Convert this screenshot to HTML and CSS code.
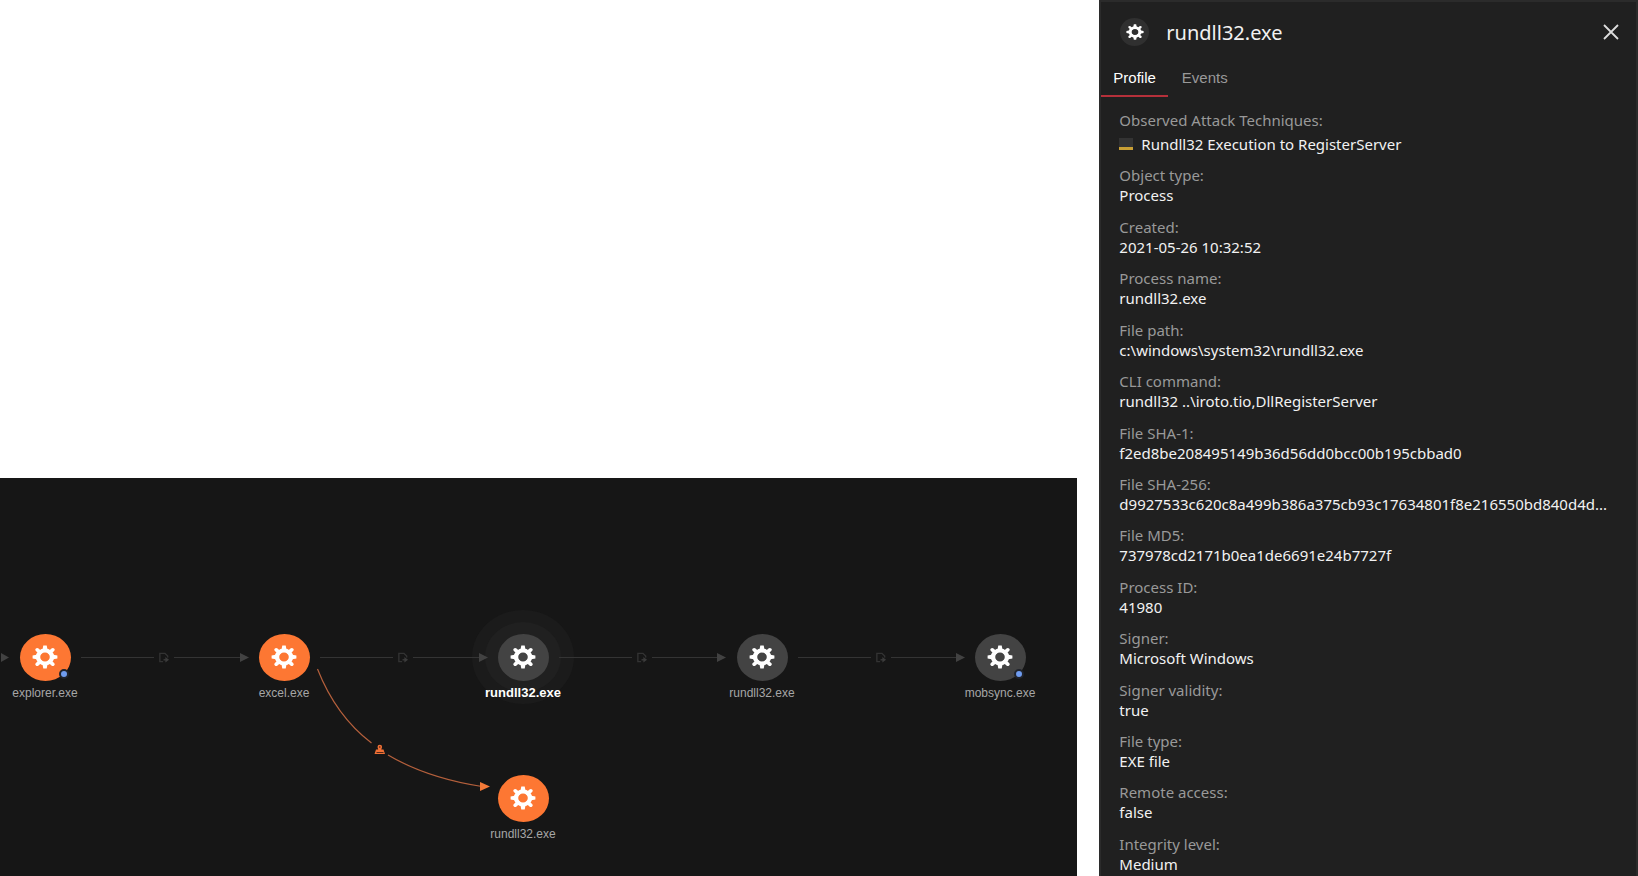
FILE: index.html
```html
<!DOCTYPE html>
<html lang="en">
<head>
  <meta charset="UTF-8">
  <meta name="viewport" content="width=device-width, initial-scale=1.0">
  <title>rundll32.exe</title>
  <link rel="stylesheet" href="styles.css">
</head>
<body>
  <svg class="defs" aria-hidden="true">
    <symbol id="gear" viewBox="0 0 26 26" preserveAspectRatio="none">
      <circle cx="13" cy="13" r="7" fill="none" stroke="#fff" stroke-width="4.4"/>
      <path d="M11.300 0.600h3.400l1 5.400h-5.400zM11.300 25.400h3.400l1-5.400h-5.400zM0.600 11.300v3.400l5.400 1v-5.400zM25.400 11.300v3.400l-5.400 1v-5.400z" fill="#fff"/>
      <path d="M5.200 5.200l3 3M17.800 17.800l3 3M20.800 5.200l-3 3M8.200 17.800l-3 3" fill="none" stroke="#fff" stroke-width="3.800" stroke-linecap="round"/>
    </symbol>
    <symbol id="launch" viewBox="0 0 12 12">
      <path d="M5 10.500H1.500V1.500H7L10 4.500V6" fill="none" stroke="#333" stroke-width="1.500"/>
      <path d="M5.500 8.500h3" stroke="#3c3c3c" stroke-width="1.500"/>
      <path d="M7.500 5.500l4 3-4 3z" fill="#3c3c3c"/>
    </symbol>
  </svg>

  <div class="page">
    <main class="graph">
      <svg class="edges" aria-hidden="true">
        <g class="halo">
          <ellipse cx="523" cy="179" rx="51" ry="47" fill="#1b1b1b"/>
          <ellipse cx="523" cy="179" rx="38" ry="35" fill="#202020"/>
        </g>
        <g fill="none" stroke="#343434">
          <path d="M81 179.500h73M174 179.500h68"/>
          <path d="M320 179.500h73M413 179.500h68"/>
          <path d="M559 179.500h73M652 179.500h68"/>
          <path d="M798 179.500h73M891 179.500h68"/>
        </g>
        <g fill="#424242">
          <path d="M1 175l8 4.500-8 4.500z"/>
          <path d="M240 175l9 4.500-9 4.500z"/>
          <path d="M479 175l9 4.500-9 4.500z"/>
          <path d="M717 175l9 4.500-9 4.500z"/>
          <path d="M956 175l9 4.500-9 4.500z"/>
        </g>
        <use href="#launch" x="158" y="174" width="12" height="11"/>
        <use href="#launch" x="397" y="174" width="12" height="11"/>
        <use href="#launch" x="636" y="174" width="12" height="11"/>
        <use href="#launch" x="875" y="174" width="12" height="11"/>
        <path d="M317.500 191Q336 238 371.500 265M388 277Q427 300 482 308.500" fill="none" stroke="#b5603c" stroke-width="1.200"/>
        <path d="M480 304l10 4.500-10 4.500z" fill="#f47a38"/>
        <path d="M377.500 269a2.300 2.300 0 0 1 4.600 0l-.8 2.500h2.200l1.500 4.500h-10.500l1.500-4.500h2.200z" fill="#f07035"/>
        <path d="M379.800 268v2M376.500 274.500h7" stroke="#5a2a18"/>
      </svg>

      <button class="node explorer alert" type="button">
        <span class="disc"><svg class="gear"><use href="#gear"/></svg><span class="dot"></span></span>
        explorer.exe
      </button>
      <button class="node excel alert" type="button">
        <span class="disc"><svg class="gear"><use href="#gear"/></svg></span>
        excel.exe
      </button>
      <button class="node rundll selected" type="button">
        <span class="disc"><svg class="gear"><use href="#gear"/></svg></span>
        rundll32.exe
      </button>
      <button class="node rundll-child" type="button">
        <span class="disc"><svg class="gear"><use href="#gear"/></svg></span>
        rundll32.exe
      </button>
      <button class="node mobsync" type="button">
        <span class="disc"><svg class="gear"><use href="#gear"/></svg><span class="dot"></span></span>
        mobsync.exe
      </button>
      <button class="node rundll-file alert" type="button">
        <span class="disc"><svg class="gear"><use href="#gear"/></svg></span>
        rundll32.exe
      </button>
    </main>

    <aside class="panel">
      <header class="panel-header">
        <span class="badge"><svg class="gear"><use href="#gear"/></svg></span>
        <h1>rundll32.exe</h1>
        <button class="close" type="button" aria-label="Close">
          <svg width="16" height="16" viewBox="0 0 16 16"><path d="M1 1l14 14M15 1L1 15" stroke="#ddd" stroke-width="1.8"/></svg>
        </button>
      </header>

      <nav class="tabs">
        <button class="tab active" type="button">Profile</button>
        <button class="tab" type="button">Events</button>
      </nav>

      <dl class="profile">
        <div class="techniques">
          <dt>Observed Attack Techniques:</dt>
          <dd><span class="risk"></span>Rundll32 Execution to RegisterServer</dd>
        </div>
        <div><dt>Object type:</dt><dd>Process</dd></div>
        <div><dt>Created:</dt><dd>2021-05-26 10:32:52</dd></div>
        <div><dt>Process name:</dt><dd>rundll32.exe</dd></div>
        <div><dt>File path:</dt><dd>c:\windows\system32\rundll32.exe</dd></div>
        <div><dt>CLI command:</dt><dd>rundll32 ..\iroto.tio,DllRegisterServer</dd></div>
        <div><dt>File SHA-1:</dt><dd>f2ed8be208495149b36d56dd0bcc00b195cbbad0</dd></div>
        <div><dt>File SHA-256:</dt><dd>d9927533c620c8a499b386a375cb93c17634801f8e216550bd840d4d...</dd></div>
        <div><dt>File MD5:</dt><dd>737978cd2171b0ea1de6691e24b7727f</dd></div>
        <div><dt>Process ID:</dt><dd>41980</dd></div>
        <div><dt>Signer:</dt><dd>Microsoft Windows</dd></div>
        <div><dt>Signer validity:</dt><dd>true</dd></div>
        <div><dt>File type:</dt><dd>EXE file</dd></div>
        <div><dt>Remote access:</dt><dd>false</dd></div>
        <div><dt>Integrity level:</dt><dd>Medium</dd></div>
      </dl>
    </aside>
  </div>
</body>
</html>
```

FILE: styles.css
```css
* {
  box-sizing: border-box;
}
body {
  margin: 0;
  background: #fff;
  font-family: "Noto Sans", "Open Sans", sans-serif;
  font-size: 15px;
}
button {
  padding: 0;
  border: none;
  background: none;
  font-family: "Liberation Sans", Arial, sans-serif;
  cursor: pointer;
}
.defs {
  position: absolute;
  width: 0;
  height: 0;
}
.page {
  display: grid;
  grid-template-columns: 2fr 1fr;
  grid-template-rows: 6fr 5fr;
  column-gap: 22px;
  min-height: 100vh;
}

/* process graph */
.graph {
  position: relative;
  grid-row: 2;
  overflow: hidden;
  background: #161616;
}
.edges {
  display: block;
  width: 100%;
  height: 100%;
}
.node {
  position: absolute;
  display: flex;
  flex-direction: column;
  align-items: center;
  gap: 4px;
  width: 100px;
  color: #a6a6a6;
  font-size: 12px;
  line-height: 16px;
}
.disc {
  position: relative;
  display: flex;
  align-items: center;
  justify-content: center;
  width: 51px;
  height: 47px;
  border-radius: 50%;
  background: #434343;
}
.alert .disc {
  background: #fd7733;
}
.selected {
  color: #fff;
  font-size: 13px;
  font-weight: bold;
}
.gear {
  width: 26px;
  height: 24px;
}
.dot {
  position: absolute;
  right: 2px;
  bottom: 2px;
  width: 10px;
  height: 10px;
  border: 2px solid #20242c;
  border-radius: 50%;
  background: #6f9cf0;
}
.explorer {
  left: -5px;
  top: 156px;
}
.excel {
  left: 234px;
  top: 156px;
}
.rundll {
  left: 473px;
  top: 156px;
}
.rundll-child {
  left: 712px;
  top: 156px;
}
.mobsync {
  left: 950px;
  top: 156px;
}
.rundll-file {
  left: 473px;
  top: 297px;
}

/* details panel */
.panel {
  display: flex;
  flex-direction: column;
  grid-column: 2;
  grid-row: 1 / 3;
  min-width: 0;
  border: 2px solid #2b2b2b;
  border-bottom: none;
  background: #202020;
  color: #f2f2f2;
}
.panel-header {
  display: flex;
  align-items: center;
  gap: 17px;
  height: 60px;
  padding: 0 17px 0 19px;
}
.badge {
  display: flex;
  align-items: center;
  justify-content: center;
  width: 29px;
  height: 28px;
  border-radius: 50%;
  background: #303030;
}
.badge .gear {
  width: 18px;
  height: 16px;
}
h1 {
  flex: 1;
  margin: 0;
  font-size: 20px;
  font-weight: normal;
}
.close svg {
  display: block;
}
.tabs {
  display: flex;
  gap: 2px;
}
.tab {
  padding: 5px 12px 6px;
  border-bottom: 2px solid transparent;
  color: #999;
  font-size: 15px;
  line-height: 22px;
}
.tab.active {
  border-color: #b5303a;
  color: #fff;
}
.profile {
  display: flex;
  flex: 1;
  flex-direction: column;
  justify-content: space-between;
  margin: 0;
  padding: 13px 16px 2px 18px;
}
dt,
dd {
  margin: 0;
  overflow: hidden;
  line-height: 20px;
  white-space: nowrap;
  text-overflow: ellipsis;
}
dt {
  color: #999;
}
.techniques dd {
  display: flex;
  align-items: center;
  gap: 8px;
  padding-top: 4px;
}
.risk {
  width: 14px;
  height: 12px;
  border-bottom: 3px solid #c9a035;
  background: #333;
}
```
